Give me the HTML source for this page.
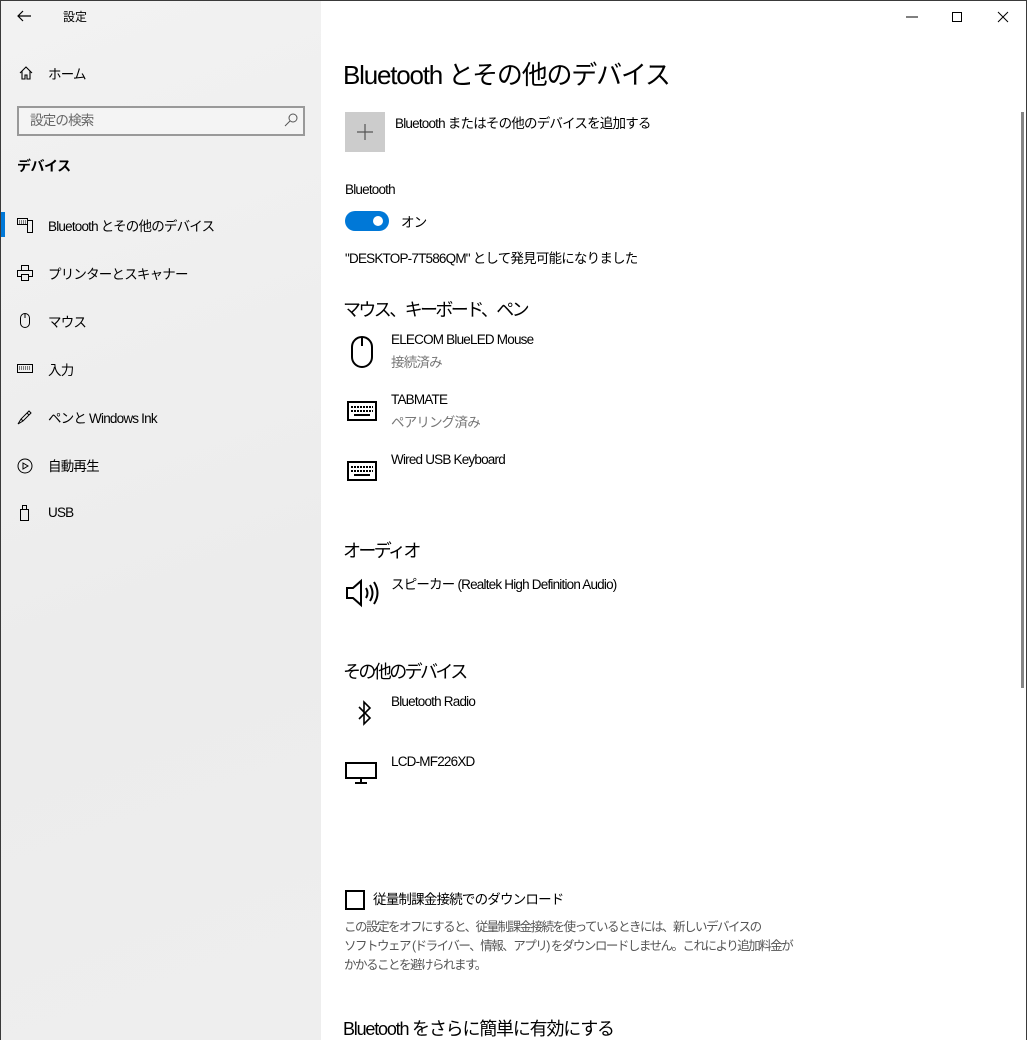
<!DOCTYPE html>
<html><head><meta charset="utf-8"><style>
*{margin:0;padding:0;box-sizing:border-box}
body{width:1027px;height:1040px;overflow:hidden;font-family:"Liberation Sans","Noto Sans CJK JP",sans-serif;color:#000;background:#fff;position:relative;font-size:13px}
.frame{position:absolute;inset:0;border:1px solid #3a3a3a;border-bottom:none;pointer-events:none;z-index:10}
.side{position:absolute;left:0;top:0;width:321px;height:1040px;background:linear-gradient(160deg,#f2f2f2 0%,#ececec 60%,#eeeeee 100%)}
.abs{position:absolute;white-space:nowrap}
.t{font-size:13.5px;letter-spacing:-0.8px}
.nav{position:absolute;left:48px;font-size:13.5px;letter-spacing:-0.8px}
.h1{font-size:26px;letter-spacing:-1.2px}
.h2{font-size:18px;letter-spacing:-2.6px}
.sub{color:#777}
svg{position:absolute;overflow:visible}
</style></head><body>
<div class="frame"></div>
<div class="side">
<svg style="left:17px;top:10px" width="14" height="12"><path d="M1 6H14M6 1L1 6L6 11" stroke="#000" fill="none" stroke-width="1.2"/></svg>
<div class="abs" style="left:63px;top:8px;font-size:12px">設定</div>
<svg style="left:19px;top:66px" width="14" height="14"><path d="M1 7L7 1L13 7M3 5V13H6V9H8V13H11V5" stroke="#000" fill="none" stroke-width="1.1"/></svg>
<div class="nav" style="top:63px">ホーム</div>
<div class="abs" style="left:17px;top:106px;width:288px;height:30px;border:2px solid #999;background:#f4f4f4"></div>
<div class="abs t" style="left:30px;top:109px;color:#666">設定の検索</div>
<svg style="left:284px;top:113px" width="14" height="14"><circle cx="9" cy="5" r="4" stroke="#555" fill="none"/><path d="M6 8L1 13" stroke="#555"/></svg>
<div class="abs" style="left:17px;top:156px;font-size:14px;font-weight:bold;letter-spacing:-0.5px">デバイス</div>
<div class="abs" style="left:0;top:212px;width:5px;height:25px;background:#0078d7"></div>
<svg style="left:17px;top:218px" width="16" height="15"><rect x="0.5" y="0.5" width="10" height="6" fill="none" stroke="#000"/><rect x="10.5" y="2.5" width="5" height="12" fill="none" stroke="#000"/><path d="M2 3h7M2 5h7" stroke="#000" stroke-dasharray="1 1"/></svg>
<div class="nav" style="top:215px">Bluetooth とその他のデバイス</div>
<svg style="left:17px;top:265px" width="16" height="16"><rect x="4.5" y="0.5" width="7" height="5" fill="none" stroke="#000"/><rect x="0.5" y="5.5" width="15" height="6" fill="none" stroke="#000"/><rect x="4.5" y="9.5" width="7" height="6" fill="#f0f0f0" stroke="#000"/></svg>
<div class="nav" style="top:263px">プリンターとスキャナー</div>
<svg style="left:20px;top:313px" width="10" height="15"><rect x="0.5" y="0.5" width="9" height="14" rx="4.5" fill="none" stroke="#000"/><path d="M5 1V5" stroke="#000"/></svg>
<div class="nav" style="top:311px">マウス</div>
<svg style="left:17px;top:364px" width="16" height="9"><rect x="0.5" y="0.5" width="15" height="8" fill="none" stroke="#000"/><path d="M2 3h12M2 5h12" stroke="#000" stroke-dasharray="1 1"/></svg>
<div class="nav" style="top:359px">入力</div>
<svg style="left:17px;top:409px" width="16" height="16"><path d="M1 15L4 10L12 2L14 4L6 12ZM4 10L6 12M10 4L12 6" stroke="#000" fill="none"/></svg>
<div class="nav" style="top:407px">ペンと Windows Ink</div>
<svg style="left:17px;top:458px" width="16" height="16"><circle cx="8" cy="8" r="7" fill="none" stroke="#000"/><path d="M6 5L11 8L6 11Z" fill="none" stroke="#000"/></svg>
<div class="nav" style="top:455px">自動再生</div>
<svg style="left:20px;top:505px" width="9" height="16"><rect x="0.5" y="4.5" width="8" height="11" fill="none" stroke="#000"/><rect x="2.5" y="0.5" width="4" height="4" fill="none" stroke="#000"/></svg>
<div class="nav" style="top:505px">USB</div>
</div>
<svg style="left:906px;top:16px" width="12" height="2"><path d="M0 1H12" stroke="#000"/></svg>
<svg style="left:952px;top:12px" width="10" height="10"><rect x="0.5" y="0.5" width="9" height="9" fill="none" stroke="#000"/></svg>
<svg style="left:998px;top:12px" width="10" height="10"><path d="M0 0L10 10M10 0L0 10" stroke="#000"/></svg>
<div class="abs" style="left:1021px;top:112px;width:3px;height:576px;background:#858585"></div>
<div class="abs h1" style="left:343px;top:55px">Bluetooth とその他のデバイス</div>
<div class="abs" style="left:345px;top:112px;width:40px;height:40px;background:#ccc"></div>
<svg style="left:357px;top:124px" width="16" height="16"><path d="M8 0V16M0 8H16" stroke="#555" stroke-width="1.2"/></svg>
<div class="abs t" style="left:395px;top:112px">Bluetooth またはその他のデバイスを追加する</div>
<div class="abs t" style="left:345px;top:182px">Bluetooth</div>
<div class="abs" style="left:345px;top:211px;width:44px;height:20px;border-radius:10px;background:#0078d7"></div>
<div class="abs" style="left:373px;top:216px;width:10px;height:10px;border-radius:5px;background:#fff"></div>
<div class="abs t" style="left:401px;top:211px">オン</div>
<div class="abs t" style="left:345px;top:247px">"DESKTOP-7T586QM" として発見可能になりました</div>
<div class="abs h2" style="left:343px;top:296px">マウス、キーボード、ペン</div>
<svg style="left:351px;top:336px" width="22" height="32"><rect x="1" y="1" width="20" height="30" rx="10" fill="none" stroke="#000" stroke-width="2"/><path d="M11 1V10" stroke="#000" stroke-width="2"/></svg>
<div class="abs t" style="left:391px;top:332px">ELECOM BlueLED Mouse</div>
<div class="abs t sub" style="left:391px;top:351px">接続済み</div>
<svg style="left:347px;top:401px" width="30" height="20"><rect x="1" y="1" width="28" height="18" fill="none" stroke="#000" stroke-width="2"/><path d="M4 6H26M4 10H26" stroke="#000" stroke-width="2" stroke-dasharray="2 1"/><path d="M7 14H23" stroke="#000" stroke-width="2"/></svg>
<div class="abs t" style="left:391px;top:392px">TABMATE</div>
<div class="abs t sub" style="left:391px;top:411px">ペアリング済み</div>
<svg style="left:347px;top:461px" width="30" height="20"><rect x="1" y="1" width="28" height="18" fill="none" stroke="#000" stroke-width="2"/><path d="M4 6H26M4 10H26" stroke="#000" stroke-width="2" stroke-dasharray="2 1"/><path d="M7 14H23" stroke="#000" stroke-width="2"/></svg>
<div class="abs t" style="left:391px;top:452px">Wired USB Keyboard</div>
<div class="abs h2" style="left:343px;top:537px">オーディオ</div>
<svg style="left:346px;top:579px" width="34" height="28"><path d="M1 9H7L15 2V26L7 19H1Z" fill="none" stroke="#000" stroke-width="2"/><path d="M20 9Q23 14 20 19M24 6Q29 14 24 22M28 3Q35 14 28 25" fill="none" stroke="#000" stroke-width="2"/></svg>
<div class="abs t" style="left:391px;top:573px">スピーカー (Realtek High Definition Audio)</div>
<div class="abs h2" style="left:343px;top:658px">その他のデバイス</div>
<svg style="left:358px;top:700px" width="14" height="26"><path d="M1 7L12 18L6 24V2L12 8L1 19" fill="none" stroke="#000" stroke-width="1.6"/></svg>
<div class="abs t" style="left:391px;top:694px">Bluetooth Radio</div>
<svg style="left:345px;top:762px" width="32" height="22"><rect x="1" y="1" width="30" height="15" fill="none" stroke="#000" stroke-width="2"/><path d="M16 16V21M10 21H22" stroke="#000" stroke-width="2"/></svg>
<div class="abs t" style="left:391px;top:754px">LCD-MF226XD</div>
<div class="abs" style="left:345px;top:890px;width:20px;height:20px;border:2px solid #000"></div>
<div class="abs t" style="left:373px;top:888px">従量制課金接続でのダウンロード</div>
<div class="abs" style="left:344px;top:918px;font-size:12.5px;color:#555;line-height:19px;letter-spacing:-1.5px">この設定をオフにすると、従量制課金接続を使っているときには、新しいデバイスの<br>ソフトウェア (ドライバー、情報、アプリ) をダウンロードしません。これにより追加料金が<br>かかることを避けられます。</div>
<div class="abs h2" style="left:343px;top:1015px;letter-spacing:-1.2px">Bluetooth をさらに簡単に有効にする</div>
</body></html>
